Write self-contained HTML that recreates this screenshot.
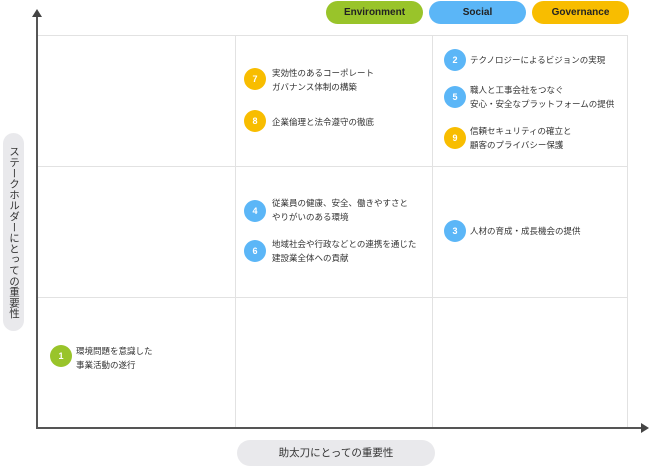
<!DOCTYPE html>
<html><head><meta charset="utf-8"><style>
body{margin:0;width:650px;height:465px;background:#fff;position:relative;overflow:hidden;font-family:"Liberation Sans","Noto Sans CJK JP",sans-serif;color:#333}
.b{position:absolute;top:1px;height:23px;width:97px;border-radius:12px;font-size:10px;font-weight:bold;text-align:center;line-height:23px;color:#222}
.grid{position:absolute;left:37px;top:35px;width:591px;height:393px;border:1px solid #e2e2e2;border-left:none;border-bottom:none;box-sizing:border-box}
.vl{position:absolute;top:35px;height:393px;width:1px;background:#e2e2e2}
.hl{position:absolute;left:37px;width:591px;height:1px;background:#e2e2e2}
.c{position:absolute;width:22px;height:22px;border-radius:50%;color:#fff;font-size:9px;text-align:center;line-height:22px;font-weight:bold}
.t{position:absolute;font-size:8.5px;line-height:14px;white-space:nowrap;color:#333}
.g{background:#99c42a}.s{background:#5bb6f7}.o{background:#f8bd00}
</style></head><body>
<div class="b g" style="left:326px">Environment</div>
<div class="b s" style="left:429px">Social</div>
<div class="b o" style="left:532px">Governance</div>
<div class="grid"></div>
<div class="vl" style="left:235px"></div><div class="vl" style="left:432px"></div>
<div class="hl" style="top:166px"></div><div class="hl" style="top:297px"></div>
<div style="position:absolute;left:36px;top:14px;width:1.5px;height:415px;background:#555"></div>
<div style="position:absolute;left:32px;top:9px;width:0;height:0;border-left:5px solid transparent;border-right:5px solid transparent;border-bottom:8px solid #444"></div>
<div style="position:absolute;left:36px;top:427px;width:606px;height:1.5px;background:#555"></div>
<div style="position:absolute;left:641px;top:423px;width:0;height:0;border-top:5px solid transparent;border-bottom:5px solid transparent;border-left:8px solid #444"></div>
<div style="position:absolute;left:3px;top:133px;width:21px;height:198px;border-radius:11px;background:#e9e9ec;writing-mode:vertical-rl;font-size:10.5px;line-height:21px;text-align:center;letter-spacing:0.3px">ステークホルダーにとっての重要性</div>
<div style="position:absolute;left:237px;top:440px;width:198px;height:26px;border-radius:13px;background:#e9e9ec;font-size:10.5px;line-height:26px;text-align:center">助太刀にとっての重要性</div>

<div class="c o" style="left:244px;top:68px">7</div><div class="t" style="left:272px;top:66px">実効性のあるコーポレート<br>ガバナンス体制の構築</div>
<div class="c o" style="left:244px;top:110px">8</div><div class="t" style="left:272px;top:115px">企業倫理と法令遵守の徹底</div>
<div class="c s" style="left:444px;top:49px">2</div><div class="t" style="left:470px;top:53px">テクノロジーによるビジョンの実現</div>
<div class="c s" style="left:444px;top:86px">5</div><div class="t" style="left:470px;top:83px">職人と工事会社をつなぐ<br>安心・安全なプラットフォームの提供</div>
<div class="c o" style="left:444px;top:127px">9</div><div class="t" style="left:470px;top:124px">信頼セキュリティの確立と<br>顧客のプライバシー保護</div>
<div class="c s" style="left:244px;top:200px">4</div><div class="t" style="left:272px;top:196px">従業員の健康、安全、働きやすさと<br>やりがいのある環境</div>
<div class="c s" style="left:244px;top:240px">6</div><div class="t" style="left:272px;top:237px">地域社会や行政などとの連携を通じた<br>建設業全体への貢献</div>
<div class="c s" style="left:444px;top:220px">3</div><div class="t" style="left:470px;top:224px">人材の育成・成長機会の提供</div>
<div class="c g" style="left:50px;top:345px">1</div><div class="t" style="left:76px;top:344px">環境問題を意識した<br>事業活動の遂行</div>
</body></html>
